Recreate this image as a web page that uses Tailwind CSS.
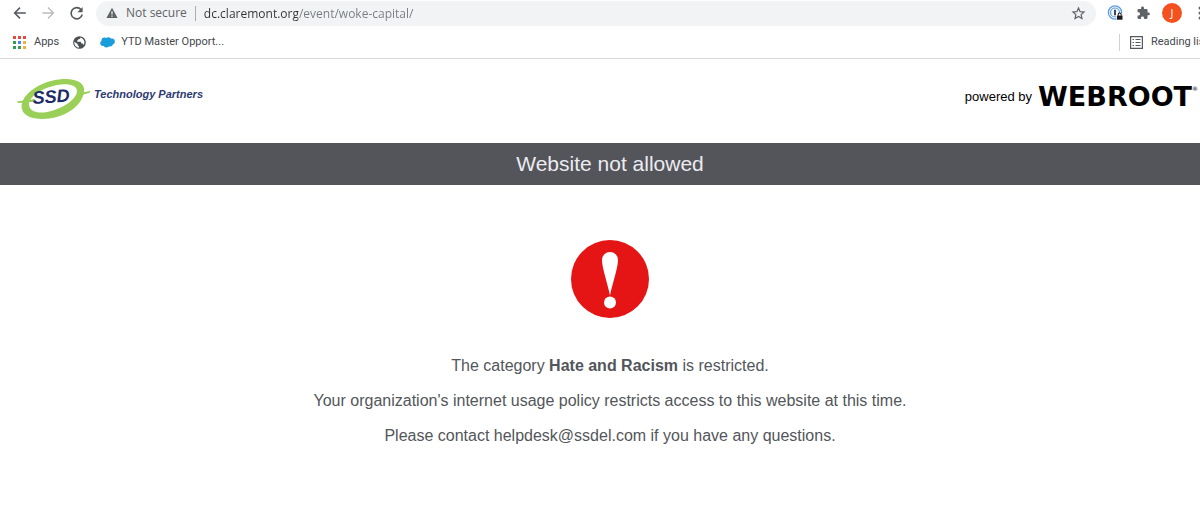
<!DOCTYPE html>
<html lang="en">
<head>
    <meta charset="UTF-8">
    <meta name="viewport" content="width=device-width, initial-scale=1.0">
    <title>Website not allowed</title>
    <script src="https://cdn.jsdelivr.net/npm/@tailwindcss/browser@4"></script>
</head>
<body class="bg-white overflow-hidden">
    <!-- the browser window runs slightly past the right edge -->
    <div class="w-[calc(100%+20px)]">

        <!-- Browser chrome -->
        <div class="border-b border-[#d6d8db] font-['Open_Sans',sans-serif]">
            <div class="flex items-center gap-2 h-[27px] px-2.5 pb-px text-[#5f6368]">
                <button aria-label="Back" class="shrink-0">
                    <svg class="size-5" viewBox="0 0 20 20" fill="none" stroke="#55595e" stroke-width="1.5"><path d="M15.800 10H4.800M10 4.600 4.600 10l5.400 5.400"/></svg>
                </button>
                <button aria-label="Forward" class="shrink-0">
                    <svg class="size-5" viewBox="0 0 20 20" fill="none" stroke="#babcbe" stroke-width="1.4"><path d="M4.400 10h11M10 4.600 15.400 10l-5.400 5.400"/></svg>
                </button>
                <button aria-label="Reload" class="shrink-0">
                    <svg class="size-5" viewBox="0 0 20 20"><path d="M15 6.600A5.600 5.600 0 1 0 16.200 11.500" fill="none" stroke="#55595e" stroke-width="1.600"/><path d="M16.600 4v5.200h-5.200z" fill="#55595e"/></svg>
                </button>
                <div class="flex items-center flex-1 h-[25px] mx-0.5 px-2.5 rounded-full bg-[#f1f3f4] text-xs">
                    <svg class="size-3 shrink-0" viewBox="0 0 12 12"><path d="M6 .8 11.600 11H.4z" fill="#5f6368"/><path d="M6 4.200v3.400M6 8.500v1.300" stroke="#f1f3f4" stroke-width="1.200"/></svg>
                    <label for="address" class="ml-2 whitespace-nowrap">Not secure</label>
                    <span class="w-px h-[15px] mx-2 bg-[#a9acb0]"></span>
                    <input id="address" type="text" value="dc.claremont.org/event/woke-capital/" class="flex-1 min-w-0 h-5 outline-none text-transparent bg-clip-text bg-[linear-gradient(90deg,#303236_94px,#777b80_94px)]">
                    <button aria-label="Bookmark this page">
                        <svg class="size-[15px]" viewBox="0 0 16 16" fill="none" stroke="#5f6368" stroke-width="1.300"><path d="m8 2.200 1.700 3.800 4.200.4-3.100 2.800.9 4.100L8 11.200l-3.700 2.100.9-4.100L2.100 6.400l4.200-.4z"/></svg>
                    </button>
                </div>
                <button aria-label="Password manager" class="shrink-0">
                    <svg class="size-5" viewBox="0 0 20 20"><circle cx="9" cy="9.500" r="6.600" fill="#fff" stroke="#5b9be0" stroke-width="1.300"/><circle cx="9" cy="9.500" r="4.500" fill="#f2f8fe" stroke="#5b9be0" stroke-width="1.200"/><path d="M9 6.700v5.500" stroke="#202c3c" stroke-width="1.700"/><path d="M10.500 10h7v7h-7z" fill="#fff"/><path d="M11 12.500h5.500v4.200H11z" fill="#1b1b1b"/><path d="M12.200 12.500v-1a1.500 1.500 0 0 1 3 0v1" fill="none" stroke="#1b1b1b" stroke-width="1.100"/></svg>
                </button>
                <button aria-label="Extensions" class="shrink-0">
                    <svg class="size-5" viewBox="-4 -5 34 34" fill="#5f6368"><path d="M20.500 11H19V7c0-1.100-.9-2-2-2h-4V3.500a2.500 2.500 0 0 0-5 0V5H4c-1.100 0-1.990.9-1.990 2v3.800H3.500c1.490 0 2.700 1.210 2.700 2.700s-1.210 2.700-2.700 2.700H2V20c0 1.100.9 2 2 2h3.800v-1.500c0-1.490 1.210-2.700 2.700-2.700s2.700 1.210 2.700 2.700V22H17c1.100 0 2-.9 2-2v-4h1.500a2.500 2.500 0 0 0 0-5z"/></svg>
                </button>
                <button class="size-5 shrink-0 rounded-full bg-[#f4511e] text-white text-[11px] leading-5" aria-label="Profile J">J</button>
                <button aria-label="Menu" class="shrink-0">
                    <svg class="size-5" viewBox="0 0 20 20" fill="#5f6368"><circle cx="10" cy="5" r="1.500"/><circle cx="10" cy="10" r="1.500"/><circle cx="10" cy="15" r="1.500"/></svg>
                </button>
            </div>

            <div class="flex items-center h-[31px] pl-[13px] font-[Roboto,sans-serif] text-[11px] text-[#45484c]">
                <a href="#" class="flex items-center gap-2">
                    <svg class="size-[13px]" viewBox="0 0 13 13"><path d="M0 0h3v3H0zM5 0h3v3H5zM10 0h3v3h-3z" fill="#e04a3f"/><path d="M0 5h3v3H0zM0 10h3v3H0zM5 10h3v3H5z" fill="#2e9e55"/><path d="M5 5h3v3H5z" fill="#4285f4"/><path d="M10 5h3v3h-3zM10 10h3v3h-3z" fill="#f0b13a"/></svg>
                    Apps
                </a>
                <a href="#" aria-label="Bookmark" class="ml-3.5">
                    <svg class="size-[13px]" viewBox="0 0 14 14"><circle cx="7" cy="7" r="6.800" fill="#4c5054"/><path d="M1.400 6.200 5 8.600v1.300l1.300 1v1.700C3 12.300 1.200 9.700 1.400 6.200zM8 1.500c-.2 1.600-.6 1.700-2.200 1.700v1.500H4.500v1.600h3.800l.8 1.800h1.400l1 1.500c1.500-2.700 1.200-6.300-3.500-8.100z" fill="#fff"/></svg>
                </a>
                <a href="#" class="flex items-center gap-1.5 ml-3.5">
                    <svg class="w-[15px] h-[11px]" viewBox="0 0 15 11" fill="#1a9ddb"><circle cx="4.500" cy="3.500" r="3"/><circle cx="8.500" cy="3" r="2.700"/><circle cx="11.800" cy="4.500" r="3"/><circle cx="3" cy="6.300" r="2.700"/><circle cx="6.500" cy="7.500" r="3"/><circle cx="10" cy="6.500" r="2.900"/></svg>
                    YTD Master Opport...
                </a>
                <div class="flex items-center ml-auto pl-2.5 border-l border-[#cfd1d4]">
                    <button class="flex items-center gap-2 whitespace-nowrap pr-3">
                        <svg class="size-[13px]" viewBox="0 0 13 13" fill="none" stroke="#55595e"><path d="M.6.6h11.800v11.800H.6z" stroke-width="1.200"/><path d="M2.500 3.500H4M5.500 3.500h5M2.500 6.500H4M5.500 6.500h5M2.500 9.500H4M5.500 9.500h5"/></svg>
                        Reading list
                    </button>
                </div>
            </div>
        </div>

        <!-- Block page -->
        <div class="font-['Liberation_Sans',sans-serif]">
            <header class="flex items-center justify-between h-[84px] pl-[17px] pr-[22px] pb-1">
                <div class="flex items-center">
                    <svg class="w-[74px] h-[44px]" viewBox="0 0 74 44">
                        <path d="M0 24.500 18 22v2.500L1 26zM60 17l13-3v1.500L60 19.500z" fill="#92cc4e"/>
                        <path fill-rule="evenodd" d="M5 32C2 20 20 5 42 2.500c16-2 27 3 25 13C64 31 45 42 25 42 14 42 6 38 5 32zM12 28c1 8 12 9 22 6 15-4 26-13 26-20 0-6-9-8-20-6C25 11 11 20 12 28z" fill="#9ad058"/>
                        <text x="16" y="27" transform="rotate(-4 16 27)" font-family="Liberation Sans, sans-serif" font-size="18" font-weight="bold" font-style="italic" fill="#1c2a66">SSD</text>
                    </svg>
                    <span class="ml-[3px] pb-2.5 text-[11px] font-bold italic text-[#2b3a70]">Technology Partners</span>
                </div>
                <div class="flex items-center gap-1.5 pb-1 text-black">
                    <span class="text-[13px]">powered by</span>
                    <span class="flex items-start font-['DejaVu_Sans',sans-serif] font-bold text-[27px] leading-7">WEBROOT<span class="text-[6px] leading-3 font-normal">®</span></span>
                </div>
            </header>

            <h1 class="h-[42px] bg-[#54555a] text-center text-[21px] leading-[42px] text-[#ececf0]">Website not allowed</h1>

            <main class="flex flex-col items-center pt-[54px] text-base leading-[19px] text-[#53565a]">
                <svg class="size-20" viewBox="0 0 80 80" role="img" aria-label="Blocked">
                    <circle cx="40" cy="40" r="39" fill="#e51515"/>
                    <path d="M40 56.500C38 46 32 29 32 21a8 8 0 0 1 16 0c0 8-6 25-8 35.500z" fill="#fff"/>
                    <circle cx="40" cy="63.500" r="6" fill="#fff"/>
                </svg>
                <div class="flex flex-col items-center gap-4 mt-[37px]">
                    <p>The category <strong>Hate and Racism</strong> is restricted.</p>
                    <p>Your organization's internet usage policy restricts access to this website at this time.</p>
                    <p>Please contact helpdesk@ssdel.com if you have any questions.</p>
                </div>
            </main>
        </div>
    </div>
</body>
</html>
